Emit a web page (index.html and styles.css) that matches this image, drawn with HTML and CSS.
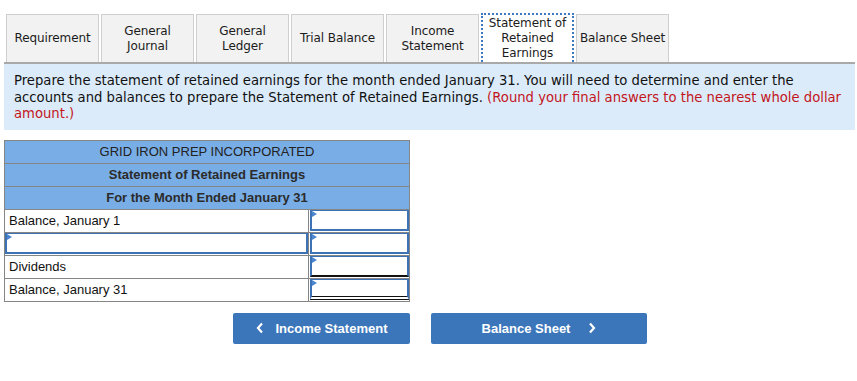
FILE: index.html
```html
<!DOCTYPE html>
<html lang="en">
<head>
  <meta charset="UTF-8">
  <title>Statement of Retained Earnings</title>
  <link rel="stylesheet" href="styles.css">
</head>
<body>
  <div class="page">
    <div class="tabs">
      <div class="tab">Requirement</div>
      <div class="tab">General<br>Journal</div>
      <div class="tab">General<br>Ledger</div>
      <div class="tab">Trial Balance</div>
      <div class="tab">Income<br>Statement</div>
      <div class="tab active">Statement of<br>Retained<br>Earnings</div>
      <div class="tab">Balance Sheet</div>
    </div>

    <div class="panel">
      Prepare the statement of retained earnings for the month ended January 31. You will need to determine and enter the accounts and balances to prepare the Statement of Retained Earnings. <span class="hint">(Round your final answers to the nearest whole dollar amount.)</span>
    </div>

    <table class="sheet">
      <tr class="head"><td colspan="2" class="light">GRID IRON PREP INCORPORATED</td></tr>
      <tr class="head"><td colspan="2">Statement of Retained Earnings</td></tr>
      <tr class="head"><td colspan="2">For the Month Ended January 31</td></tr>
      <tr>
        <td class="label">Balance, January 1</td>
        <td class="amt"><div class="field"></div></td>
      </tr>
      <tr>
        <td class="label pick"><div class="field"></div></td>
        <td class="amt"><div class="field"></div></td>
      </tr>
      <tr>
        <td class="label">Dividends</td>
        <td class="amt"><div class="field single"></div></td>
      </tr>
      <tr>
        <td class="label">Balance, January 31</td>
        <td class="amt"><div class="field double"></div></td>
      </tr>
    </table>

    <div class="nav">
      <button class="nav-btn prev">
        <svg width="8" height="12" viewBox="0 0 8 12"><path d="M6 1.5 L2 6 L6 10.5" fill="none" stroke="#fff" stroke-width="2.2"/></svg>
        <span>Income Statement</span>
      </button>
      <button class="nav-btn next">
        <span>Balance Sheet</span>
        <svg width="8" height="12" viewBox="0 0 8 12"><path d="M2 1.5 L6 6 L2 10.5" fill="none" stroke="#fff" stroke-width="2.2"/></svg>
      </button>
    </div>
  </div>
</body>
</html>
```

FILE: styles.css
```css
*{box-sizing:border-box;}
body{margin:0;background:#fff;font-family:'DejaVu Sans',Verdana,sans-serif;}
.page{padding:13px 2px 0 4px;}

.tabs{display:flex;gap:2px;padding-left:2px;align-items:flex-end;}
.tab{width:93px;height:48px;background:#f2f2f2;border:1px solid #cfcfcf;border-bottom:none;display:flex;align-items:center;justify-content:center;text-align:center;font-size:12px;line-height:15px;color:#1c1c1c;letter-spacing:-0.1px;}
.tab.active{height:49px;background:#fff;border:2px dotted #3f78bd;border-bottom:none;}

.panel{border-top:2px solid #a9a9a9;background:#dcebf9;padding:9px 6px 7px 10px;font-size:13.2px;line-height:16.5px;color:#111;}
.hint{color:#c3161c;}

.sheet{margin-top:10px;border-collapse:collapse;width:406px;font-family:'Liberation Sans',Arial,sans-serif;font-size:13px;}
.sheet td{border:1px solid #858585;height:23px;padding:0;}
.head td{background:#79ade6;text-align:center;font-weight:bold;color:#2b2b2b;}
.head td.light{font-weight:normal;color:#222;}
.label{padding:0 4px !important;color:#111;}
.label.pick{padding:0 !important;}
.amt{width:101px;}
.field{position:relative;height:21px;margin:0 0 0 1px;border:2px solid #3d72b4;border-width:1.5px 2px 2px 2px;background:#fff;}
.label.pick .field{margin:0;}
.field::before{content:"";position:absolute;left:0;top:0;border-left:5px solid #4a86cf;border-top:3px solid transparent;border-bottom:3px solid transparent;}
.field.single{border-bottom:2px solid #111;}
.field.double{border-bottom:4px double #111;}

.nav{display:flex;gap:21px;padding-left:229px;margin-top:11px;}
.nav-btn{height:31px;border:none;border-radius:2px;background:#3b76ba;color:#fff;font-family:'Liberation Sans',Arial,sans-serif;font-weight:bold;font-size:13px;display:flex;align-items:center;justify-content:center;gap:12px;cursor:pointer;}
.nav-btn.prev{width:177px;}
.nav-btn.next{width:216px;gap:18px;}
```
